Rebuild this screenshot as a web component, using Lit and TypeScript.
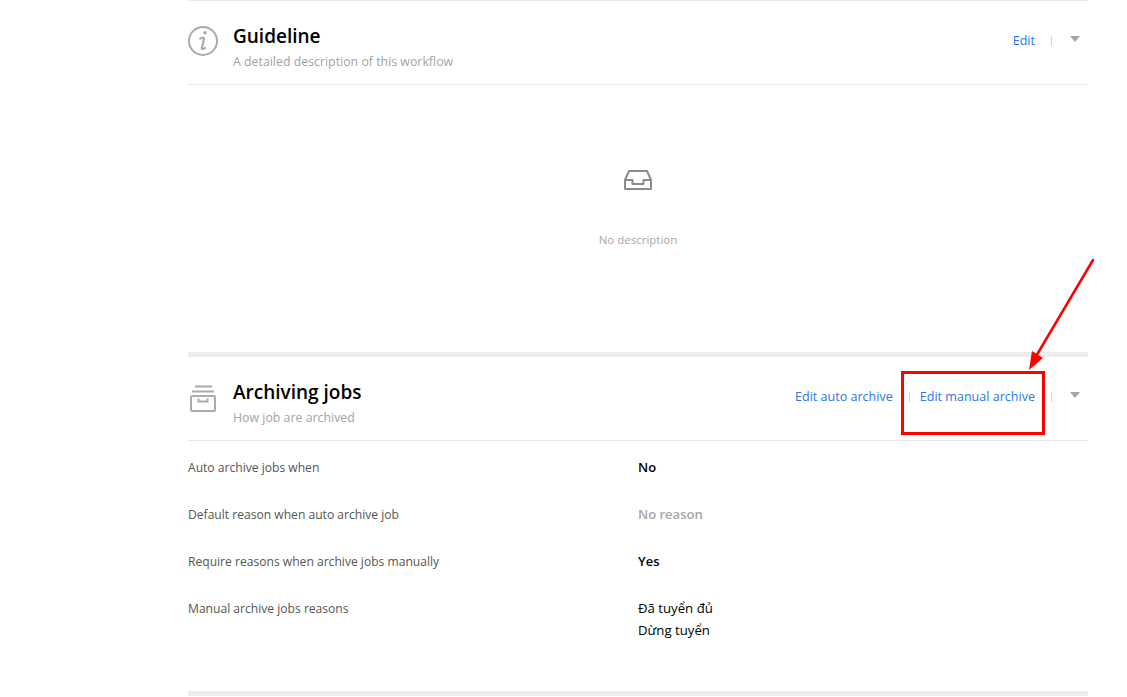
import { LitElement, html, css, svg } from "lit";
import { customElement } from "lit/decorators.js";

@customElement("app-root")
export class AppRoot extends LitElement {
  static styles = css`
    :host { display: block; height: 697px; overflow: hidden; background: #fff; position: relative;
      font-family: "Open Sans", "Noto Sans", sans-serif; font-size: 12.1px; color: #000; }
    .page { width: 900px; margin-left: 188px; border-top: 1px solid #e8e8e8; }
    .head { height: 83px; display: flex; border-bottom: 1px solid #e5e5e5; box-sizing: content-box; }
    .ico { width: 30px; height: 30px; margin-top: 25px; margin-right: 15px; flex: none; color: #aaa; }
    .titles { flex: 1; padding-top: 20px; }
    .title { font-size: 19px; line-height: 30px; font-weight: 600; color: #000; }
    .sub { font-size: 12.35px; line-height: 21px; color: #a3a3a3; }
    .actions { display: flex; align-items: center; height: 16px; margin-top: 32px; padding-right: 8px; color: #2a78e0; }
    .actions a { font-size: 12.55px; line-height: 16px; }
    .sep { width: 1px; height: 10px; background: #d4d4d4; margin: 0 10px 0 16px; }
    .caret { width: 0; height: 0; border: 5.5px solid transparent; border-top: 6px solid #a6a6a6; border-bottom: 0; margin: -4px 0 0 8px; }
    .empty { height: 267px; display: flex; flex-direction: column; align-items: center; color: #a8a8a8; }
    .empty svg { margin-top: 83px; width: 30px; height: 24px; color: #8c8c8c; }
    .empty span { margin-top: 40px; line-height: 16px; font-size: 11.5px; }
    .bar { height: 5px; background: #ececec; }
    .rows { padding-top: 16px; }
    .row { display: grid; grid-template-columns: 450px 1fr; line-height: 22px; margin-bottom: 25px; color: #555; }
    .val { color: #000; font-weight: 600; font-size: 13px; margin-top: -1px; margin-bottom: 1px; }
    .val.muted { color: #a6a6a6; }
    .val.list { font-weight: 400; font-size: 13.2px; }
    .bottom { margin-top: 49px; }
    .box { position: absolute; left: 901px; top: 371px; width: 144px; height: 64px; box-sizing: border-box; border: 3px solid #f00; }
    .arrow { position: absolute; left: 1020px; top: 250px; }
  `;

  private row(label: string, val: unknown, cls = "") {
    return html`<div class="row"><div>${label}</div><div class="val ${cls}">${val}</div></div>`;
  }

  render() {
    return html`
      <div class="page">
        <div class="head">
          <svg class="ico" viewBox="0 0 30 30" fill="none" stroke="currentColor">
            <circle cx="15" cy="15" r="14" stroke-width="2"></circle>
            <circle cx="17" cy="6.8" r="1.8" fill="currentColor" stroke="none"></circle>
            <path d="M12.2 12.6c2-1.2 4.2-1.5 3.8.3l-2.2 9c-.3 1.7 1.6 1.4 3.4 0" stroke-width="2.1" stroke-linecap="round"></path>
          </svg>
          <div class="titles">
            <div class="title">Guideline</div>
            <div class="sub">A detailed description of this workflow</div>
          </div>
          <div class="actions">
            <a>Edit</a><span class="sep"></span><span class="caret"></span>
          </div>
        </div>
        <div class="empty">
          <svg viewBox="0 0 30 24" fill="none" stroke="currentColor" stroke-width="2">
            <path d="M2 12 6 3h18l4 9v9H2zM2 12h7.5v4h11v-4H28" stroke-linejoin="round"></path>
          </svg>
          <span>No description</span>
        </div>
        <div class="bar"></div>
        <div class="head">
          <svg class="ico" viewBox="0 0 30 30" fill="none" stroke="currentColor" stroke-width="2">
            <path d="M7 4.5h17M4 9.5h22"></path>
            <rect x="3" y="14" width="24" height="15" rx="1"></rect>
            <path d="M10.5 16.5v3h9v-3"></path>
          </svg>
          <div class="titles">
            <div class="title">Archiving jobs</div>
            <div class="sub">How job are archived</div>
          </div>
          <div class="actions">
            <a>Edit auto archive</a><span class="sep"></span>
            <a>Edit manual archive</a><span class="sep"></span><span class="caret"></span>
          </div>
        </div>
        <div class="rows">
          ${this.row("Auto archive jobs when", "No")}
          ${this.row("Default reason when auto archive job", "No reason", "muted")}
          ${this.row("Require reasons when archive jobs manually", "Yes")}
          ${this.row("Manual archive jobs reasons", html`<div>Đã tuyển đủ</div><div>Dừng tuyển</div>`, "list")}
        </div>
        <div class="bar bottom"></div>
      </div>
      <div class="box"></div>
      <svg class="arrow" width="80" height="125" viewBox="0 0 80 125">
        ${svg`<path d="M73 10 15 108" stroke="#f00" stroke-width="2.5" stroke-linecap="round"></path>
        <path d="M9 120 12 101 23 108z" fill="#f00"></path>`}
      </svg>
    `;
  }
}
